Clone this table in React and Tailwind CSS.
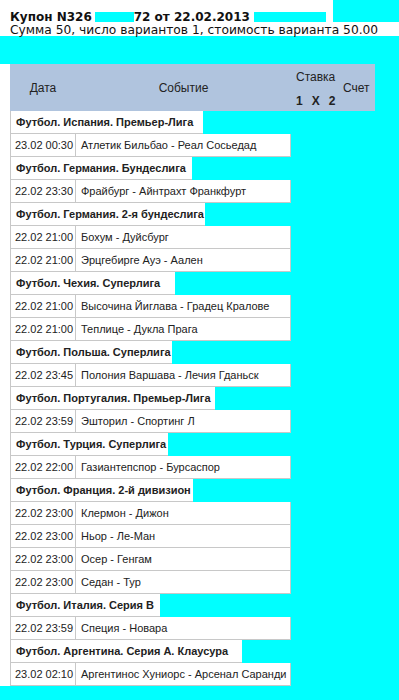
import React from "react";

const data = [
  { c: "Футбол. Испания. Премьер-Лига", w: 193, m: [["23.02 00:30", "Атлетик Бильбао - Реал Сосьедад"]] },
  { c: "Футбол. Германия. Бундеслига", w: 182, m: [["22.02 23:30", "Фрайбург - Айнтрахт Франкфурт"]] },
  { c: "Футбол. Германия. 2-я бундеслига", w: 195, m: [["22.02 21:00", "Бохум - Дуйсбург"], ["22.02 21:00", "Эрцгебирге Ауэ - Аален"]] },
  { c: "Футбол. Чехия. Суперлига", w: 165, m: [["22.02 21:00", "Высочина Йиглава - Градец Кралове"], ["22.02 21:00", "Теплице - Дукла Прага"]] },
  { c: "Футбол. Польша. Суперлига", w: 162, m: [["22.02 23:45", "Полония Варшава - Лечия Гданьск"]] },
  { c: "Футбол. Португалия. Премьер-Лига", w: 205, m: [["22.02 23:59", "Эшторил - Спортинг Л"]] },
  { c: "Футбол. Турция. Суперлига", w: 158, m: [["22.02 22:00", "Газиантепспор - Бурсаспор"]] },
  { c: "Футбол. Франция. 2-й дивизион", w: 183, m: [["22.02 23:00", "Клермон - Дижон"], ["22.02 23:00", "Ньор - Ле-Ман"], ["22.02 23:00", "Осер - Генгам"], ["22.02 23:00", "Седан - Тур"]] },
  { c: "Футбол. Италия. Серия В", w: 150, m: [["22.02 23:59", "Специя - Новара"]] },
  { c: "Футбол. Аргентина. Серия А. Клаусура", w: 232, m: [["23.02 02:10", "Аргентинос Хуниорс - Арсенал Саранди"]] },
];

export default function App() {
  return (
    <div className="relative min-h-[700px] w-[399px] overflow-hidden bg-[#00ffff] text-[#111]">
      <div className="relative h-[36px] bg-white px-[10px] pt-[11px] font-['DejaVu_Sans',sans-serif] text-[12.25px] leading-[13px]">
        <div className="flex whitespace-nowrap text-[12px] font-bold">
          <span>Купон N326</span>
          <span className="ml-[3px] mt-[1px] h-[10px] w-[39px] shrink-0 bg-[#00ffff]"></span>
          <span>72 от 22.02.2013</span>
          <span className="ml-[4px] mt-[1px] h-[10px] w-[72px] shrink-0 bg-[#00ffff]"></span>
        </div>
        <div className="whitespace-nowrap">Сумма 50, число вариантов 1, стоимость варианта 50.00</div>
        <div className="absolute right-0 top-0 h-[22px] w-[66px] bg-[#00ffff]"></div>
      </div>
      <div className="mt-[28px] flex font-['Liberation_Sans',Arial,sans-serif] text-[11px] text-[#222]">
        <div className="w-[10px] shrink-0 bg-white"></div>
        <div className="flex flex-col">
          <div className="flex h-[47px] w-[365px] bg-[#b0c4de] text-[12px]">
            <div className="flex w-[66px] shrink-0 items-center justify-center">Дата</div>
            <div className="flex w-[215px] shrink-0 items-center justify-center">Событие</div>
            <div className="flex w-[49px] shrink-0 flex-col justify-center pl-[5px] pt-[2px]">
              <div className="mb-[6px]">Ставка</div>
              <div className="flex gap-[9px] font-bold">
                <span>1</span>
                <span>X</span>
                <span>2</span>
              </div>
            </div>
            <div className="flex w-[35px] shrink-0 items-center pl-[3px]">Счет</div>
          </div>
          {data.map((g, i) => (
            <React.Fragment key={i}>
              <div className="flex h-[23px] w-[281px]">
                <div
                  className="flex h-full shrink-0 items-center whitespace-nowrap border-b border-l border-[#c8c8c8] bg-white pl-[5px] font-bold"
                  style={{ width: g.w }}
                >
                  {g.c}
                </div>
                <div className="flex-1"></div>
              </div>
              {g.m.map((r, j) => (
                <div key={j} className="flex h-[23px] w-[281px] border-x border-b border-[#c8c8c8] bg-white">
                  <div className="flex w-[65px] shrink-0 items-center whitespace-nowrap border-r border-[#c8c8c8] pl-[4px]">{r[0]}</div>
                  <div className="flex flex-1 items-center whitespace-nowrap pl-[5px]">{r[1]}</div>
                </div>
              ))}
            </React.Fragment>
          ))}
        </div>
      </div>
    </div>
  );
}
